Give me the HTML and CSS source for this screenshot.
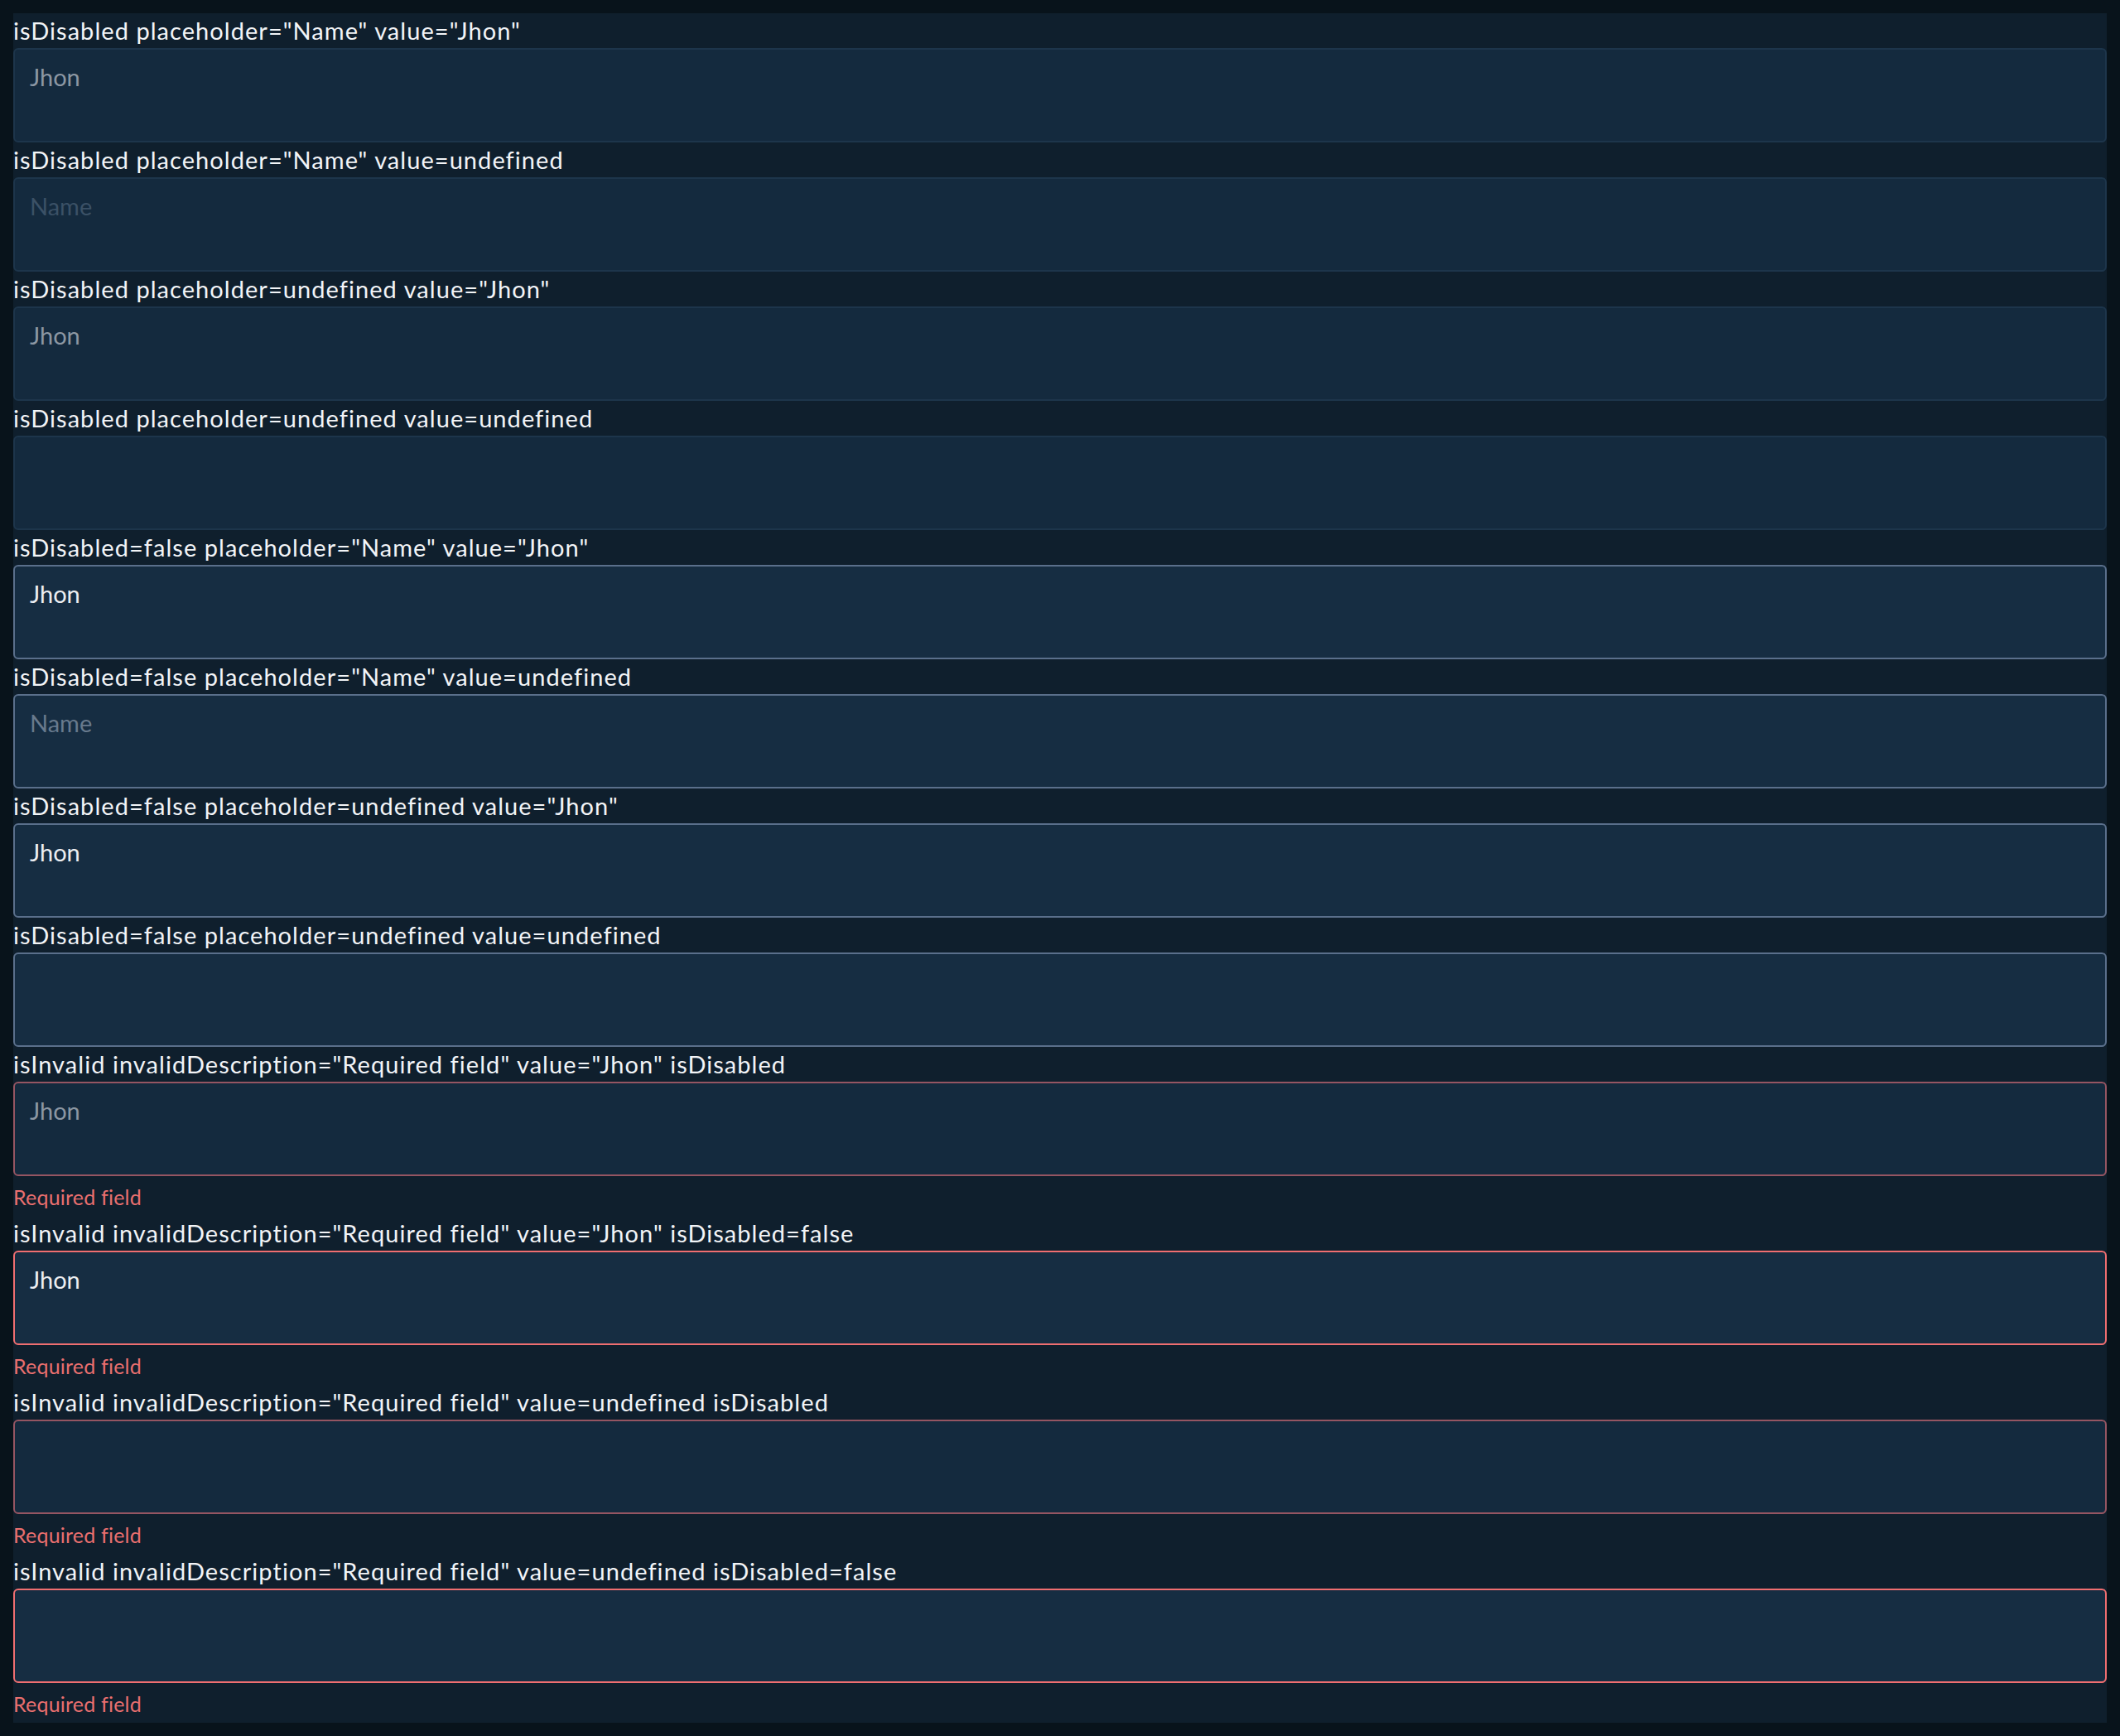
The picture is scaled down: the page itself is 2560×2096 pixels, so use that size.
FILE: index.html
```html
<!DOCTYPE html>
<html lang="en">
<head>
<meta charset="utf-8">
<title>Input states</title>
<link rel="stylesheet" href="styles.css">
</head>
<body>
<main class="panel">
  <div class="row">
    <div class="label">isDisabled placeholder="Name" value="Jhon"</div>
    <textarea class="field" placeholder="Name" disabled>Jhon</textarea>
  </div>
  <div class="row">
    <div class="label">isDisabled placeholder="Name" value=undefined</div>
    <textarea class="field" placeholder="Name" disabled></textarea>
  </div>
  <div class="row">
    <div class="label">isDisabled placeholder=undefined value="Jhon"</div>
    <textarea class="field" disabled>Jhon</textarea>
  </div>
  <div class="row">
    <div class="label">isDisabled placeholder=undefined value=undefined</div>
    <textarea class="field" disabled></textarea>
  </div>
  <div class="row">
    <div class="label">isDisabled=false placeholder="Name" value="Jhon"</div>
    <textarea class="field" placeholder="Name">Jhon</textarea>
  </div>
  <div class="row">
    <div class="label">isDisabled=false placeholder="Name" value=undefined</div>
    <textarea class="field" placeholder="Name"></textarea>
  </div>
  <div class="row">
    <div class="label">isDisabled=false placeholder=undefined value="Jhon"</div>
    <textarea class="field">Jhon</textarea>
  </div>
  <div class="row">
    <div class="label">isDisabled=false placeholder=undefined value=undefined</div>
    <textarea class="field"></textarea>
  </div>
  <div class="row">
    <div class="label">isInvalid invalidDescription="Required field" value="Jhon" isDisabled</div>
    <textarea class="field invalid" disabled>Jhon</textarea>
    <div class="helper">Required field</div>
  </div>
  <div class="row">
    <div class="label">isInvalid invalidDescription="Required field" value="Jhon" isDisabled=false</div>
    <textarea class="field invalid">Jhon</textarea>
    <div class="helper">Required field</div>
  </div>
  <div class="row">
    <div class="label">isInvalid invalidDescription="Required field" value=undefined isDisabled</div>
    <textarea class="field invalid" disabled></textarea>
    <div class="helper">Required field</div>
  </div>
  <div class="row">
    <div class="label">isInvalid invalidDescription="Required field" value=undefined isDisabled=false</div>
    <textarea class="field invalid"></textarea>
    <div class="helper">Required field</div>
  </div>
</main>
</body>
</html>
```
FILE: styles.css
```css
html, body {
  margin: 0;
  padding: 0;
}
body {
  background: #08131b;
  padding: 16px;
  font-family: Lato, "Noto Sans", sans-serif;
}
.panel {
  background: #0f1f2d;
  display: flex;
  flex-direction: column;
}
.row {
  display: flex;
  flex-direction: column;
}
.label {
  color: #f2f4f7;
  font-size: 29px;
  letter-spacing: 1.05px;
  line-height: 42px;
  height: 42px;
  white-space: nowrap;
}
.field {
  display: block;
  box-sizing: border-box;
  width: 100%;
  height: 114px;
  margin: 0;
  padding: 16px 18px;
  border: 2px solid #5a6f8b;
  border-radius: 6px;
  background: #162d42;
  color: #eceef1;
  font-family: Lato, "Noto Sans", sans-serif;
  font-size: 29px;
  line-height: 1.2;
  resize: none;
  outline: none;
  overflow: hidden;
}
.field::placeholder {
  color: #687a8d;
  opacity: 1;
}
.field:disabled {
  background: #142a3e;
  border-color: #1d354b;
  color: #8c97a3;
}
.field:disabled::placeholder {
  color: #3b5166;
}
.field.invalid {
  border-color: #ef6e70;
}
.field.invalid:disabled {
  border-color: #955562;
}
.helper {
  color: #ea6f6f;
  font-size: 25px;
  letter-spacing: 0.2px;
  line-height: 45px;
  height: 45px;
  padding-top: 3px;
}
```
